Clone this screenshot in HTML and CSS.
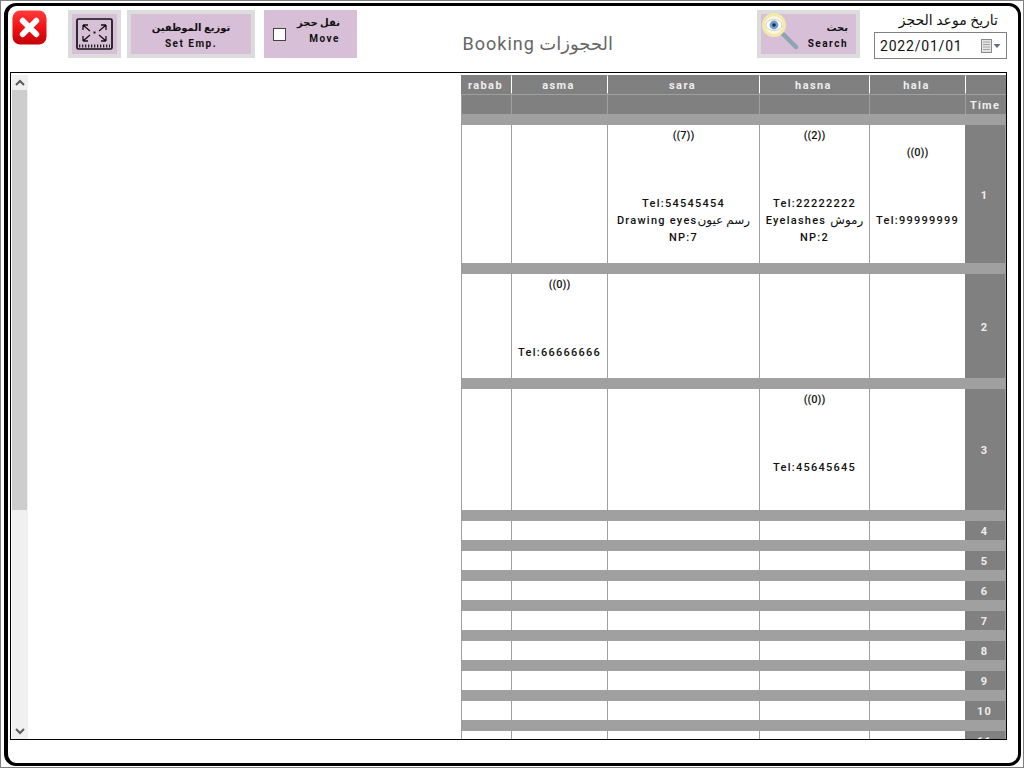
FILE: index.html
```html
<!DOCTYPE html>
<html lang="ar">
<head>
<meta charset="utf-8">
<title>Booking</title>
<link rel="stylesheet" href="styles.css">
</head>
<body>
<div class="edge">
<div class="frame">
  <header class="top">
    <svg class="close" viewBox="0 0 36 36" width="35" height="35">
      <defs><linearGradient id="red" x1="0" y1="0" x2="0" y2="1"><stop offset="0" stop-color="#ff3b3b"/><stop offset="0.55" stop-color="#ee0f14"/><stop offset="1" stop-color="#c40008"/></linearGradient></defs>
      <rect x="0.5" y="0.5" width="35" height="35" rx="8" fill="url(#red)"/>
      <path d="M11 11 L25 25 M25 11 L11 25" stroke="#fff" stroke-width="6" stroke-linecap="round"/>
    </svg>
    <button class="btn expand">
      <span class="fill">
        <svg viewBox="0 0 37 32" width="37" height="32">
          <rect x="1" y="1" width="35" height="30" rx="1.5" fill="none" stroke="#111" stroke-width="1.7"/>
          <path d="M7 7 L14 13 M7 7 h5 M7 7 v5 M30 7 L23 13 M30 7 h-5 M30 7 v5 M7 23 L14 17 M7 23 h5 M7 23 v-5 M30 23 L23 17 M30 23 h-5 M30 23 v-5" fill="none" stroke="#111" stroke-width="1.3"/>
          <rect x="17.5" y="13.5" width="2" height="2" fill="#111"/>
          <path d="M3 28 H34" stroke="#222" stroke-width="3" stroke-dasharray="1.3 1.7"/>
        </svg>
      </span>
    </button>
    <button class="btn emp">
      <span class="fill two"><span>توزيع الموظفين</span><span>Set Emp.</span></span>
    </button>
    <label class="move">
      <span class="box"></span>
      <span class="movetext"><span>نقل حجز</span><span>Move</span></span>
    </label>
    <h1 class="title">الحجوزات Booking</h1>
    <button class="btn search">
      <span class="fill searchfill">
        <svg class="lens" viewBox="0 0 38 38" width="38" height="38">
          <path d="M21 21 L35 35" stroke="#8fa3b3" stroke-width="4.5" stroke-linecap="round"/>
          <circle cx="13" cy="13" r="10.5" fill="#f7f7ee" stroke="#f3eaa8" stroke-width="3"/>
          <ellipse cx="13" cy="13" rx="8" ry="5.5" fill="#fff" stroke="#c9b98a" stroke-width="0.7"/>
          <circle cx="13" cy="13" r="4.4" fill="#6aa0d6"/>
          <circle cx="13" cy="13" r="1.8" fill="#1d2c44"/>
        </svg>
        <span class="searchtext"><span>بحث</span><span>Search</span></span>
      </span>
    </button>
    <div class="date">
      <div class="datelabel">تاريخ موعد الحجز</div>
      <div class="dateinput">
        <span class="dateval">2022/01/01</span>
        <svg viewBox="0 0 20 14" width="20" height="14">
          <rect x="0.5" y="0.5" width="10" height="13" fill="#e4e4e4" stroke="#8a8a8a"/>
          <path d="M2 3 h7 M2 5.5 h7 M2 8 h7 M2 10.5 h7" stroke="#a5a5a5"/>
          <path d="M12.5 5 h7 l-3.5 4 z" fill="#5e6f85"/>
        </svg>
      </div>
    </div>
  </header>
  <main class="panel">
    <div class="scrollbar">
      <div class="sbtn"><svg viewBox="0 0 10 7" width="10" height="7"><path d="M1 6 L5 2 L9 6" fill="none" stroke="#5a5a5a" stroke-width="2"/></svg></div>
      <div class="thumb"></div>
      <div class="track"></div>
      <div class="sbtn"><svg viewBox="0 0 10 7" width="10" height="7"><path d="M1 1 L5 5 L9 1" fill="none" stroke="#5a5a5a" stroke-width="2"/></svg></div>
    </div>
    <div class="empty"></div>
    <table class="grid">
      <colgroup><col class="c1"><col class="c2"><col class="c3"><col class="c4"><col class="c5"><col class="c6"></colgroup>
      <tr class="r-head"><th>rabab</th><th>asma</th><th>sara</th><th>hasna</th><th>hala</th><th></th></tr>
      <tr class="r-sub"><td></td><td></td><td></td><td></td><td></td><td>Time</td></tr>
      <tr class="r-gap"><td colspan="6"></td></tr>
      <tr class="r-a">
        <td></td><td></td>
        <td><span class="count">((7))</span><br><br><br><br>Tel:54545454<br>Drawing eyes<span class="ar" dir="rtl">رسم عيون</span><br>NP:7<br><br></td>
        <td><span class="count">((2))</span><br><br><br><br>Tel:22222222<br>Eyelashes <span class="ar" dir="rtl">رموش</span><br>NP:2<br><br></td>
        <td><span class="count">((0))</span><br><br><br><br>Tel:99999999<br><br></td>
        <td class="t">1</td>
      </tr>
      <tr class="r-gap"><td colspan="6"></td></tr>
      <tr class="r-b">
        <td></td>
        <td><span class="count">((0))</span><br><br><br><br>Tel:66666666<br><br></td>
        <td></td><td></td><td></td>
        <td class="t">2</td>
      </tr>
      <tr class="r-gap"><td colspan="6"></td></tr>
      <tr class="r-c">
        <td></td><td></td><td></td>
        <td><span class="count">((0))</span><br><br><br><br>Tel:45645645<br><br><br></td>
        <td></td>
        <td class="t">3</td>
      </tr>
      <tr class="r-gap"><td colspan="6"></td></tr>
      <tr class="r-s"><td></td><td></td><td></td><td></td><td></td><td class="t">4</td></tr>
      <tr class="r-gap"><td colspan="6"></td></tr>
      <tr class="r-s"><td></td><td></td><td></td><td></td><td></td><td class="t">5</td></tr>
      <tr class="r-gap"><td colspan="6"></td></tr>
      <tr class="r-s"><td></td><td></td><td></td><td></td><td></td><td class="t">6</td></tr>
      <tr class="r-gap"><td colspan="6"></td></tr>
      <tr class="r-s"><td></td><td></td><td></td><td></td><td></td><td class="t">7</td></tr>
      <tr class="r-gap"><td colspan="6"></td></tr>
      <tr class="r-s"><td></td><td></td><td></td><td></td><td></td><td class="t">8</td></tr>
      <tr class="r-gap"><td colspan="6"></td></tr>
      <tr class="r-s"><td></td><td></td><td></td><td></td><td></td><td class="t">9</td></tr>
      <tr class="r-gap"><td colspan="6"></td></tr>
      <tr class="r-s"><td></td><td></td><td></td><td></td><td></td><td class="t">10</td></tr>
      <tr class="r-gap"><td colspan="6"></td></tr>
      <tr class="r-s"><td></td><td></td><td></td><td></td><td></td><td class="t">11</td></tr>
    </table>
  </main>
</div>
</div>
</body>
</html>
```
FILE: styles.css
```css
* { box-sizing: border-box; }
html, body { margin: 0; padding: 0; height: 768px; overflow: hidden; }
body {
  background: #808080;
  padding: 1px;
  font-family: "Roboto", "DejaVu Sans", sans-serif;
  direction: ltr;
}
.edge { background: #fff; height: 766px; padding: 2px 2px 1px 3px; }
.frame {
  height: 100%;
  border: solid #000;
  border-width: 3px 3px 3px 4px;
  border-radius: 12px;
  background: #fff;
  padding: 0 0 0 2px;
}
.top { display: flex; align-items: flex-start; height: 66px; padding: 4px 0 0 2px; }
.close { flex: none; }
.btn {
  border: 0; margin: 0; padding: 4px 4px; background: #dcdcdc;
  height: 48px; font: inherit; color: #111; display: flex;
}
.fill { flex: 1; background: #d8bfd8; display: flex; }
.expand { width: 53px; margin-left: 21px; }
.expand .fill { align-items: center; justify-content: center; }
.emp { width: 128px; margin-left: 6px; }
.two { flex-direction: column; align-items: center; justify-content: center; padding-top: 3px; }
.two span, .movetext span, .searchtext span { font-size: 10px; font-weight: 700; letter-spacing: 1.5px; line-height: 16px; }
.move {
  width: 93px; height: 48px; margin-left: 9px; background: #d8bfd8;
  display: flex; align-items: center; padding-left: 9px; color: #111;
}
.box { width: 13px; height: 13px; background: #fff; border: 1px solid #444; }
.movetext { margin: -6px 0 0; width: 54px; display: flex; flex-direction: column; align-items: flex-end; }
.title {
  margin: 24px 0 0 107px; width: 149px; font-size: 18px; font-weight: 400; line-height: 20px;
  color: #666; letter-spacing: 1px; white-space: nowrap; direction: rtl; text-align: left;
}
.search { width: 103px; margin-left: 144px; }
.searchfill { padding-right: 8px; justify-content: space-between; }
.lens { margin: -2px 0 0 0; flex: none; }
.searchtext { display: flex; flex-direction: column; align-items: flex-end; justify-content: center; color: #111; padding-top: 3px; }
.date { margin-left: 14px; width: 133px; }
.datelabel { height: 22px; font-size: 14px; line-height: 21px; letter-spacing: 0.7px; color: #111; text-align: right; padding-right: 9px; }
.dateinput {
  height: 27px; border: 1px solid #808080; display: flex; align-items: center;
  justify-content: space-between; padding: 0 5px;
}
.dateval { font-size: 14px; letter-spacing: 0.8px; color: #111; }

.panel {
  width: 997px; height: 668px; border: 1px solid #000; display: flex; overflow: hidden;
  padding: 2px 0 0 1px; background: #fff;
}
.scrollbar { flex: none; width: 16px; height: 664px; display: flex; flex-direction: column; background: #f0f0f0; }
.sbtn { height: 15px; flex: none; display: flex; align-items: center; justify-content: center; }
.thumb { height: 420px; background: #cdcdcd; margin-right: 1px; flex: none; }
.track { flex: 1; }
.empty { flex: 1; }

.grid {
  flex: none; width: 545px; table-layout: fixed; border-collapse: separate; border-spacing: 0;
  align-self: flex-start; font-size: 11px; font-weight: 500; letter-spacing: 1.25px; line-height: 17px; color: #111;
}
.c1 { width: 50px; } .c2 { width: 96px; } .c3 { width: 152px; }
.c4 { width: 110px; } .c5 { width: 96px; } .c6 { width: 41px; }
.grid th, .grid td { padding: 2px 0 0; text-align: center; white-space: nowrap; overflow: hidden; }
.grid td { border-left: 1px solid #a0a0a0; vertical-align: middle; background: #fff; }
.count { font-size: 11px; letter-spacing: 0; }
.ar { font-size: 12px; letter-spacing: 1.4px; }
.r-head th {
  height: 19px; background: #808080; color: #eee; font-size: 11px; font-weight: 700; line-height: 15px; letter-spacing: 1.4px;
  border-left: 1px solid #fff; border-top: 1px solid #808080; border-bottom: 1px solid #808080; padding-right: 2px;
}
.r-head th:first-child { border-left-color: #808080; }
.r-sub td { height: 20px; background: #808080; color: #eee; font-weight: 700; line-height: 15px; border-top: 1px solid #a0a0a0; padding-right: 2px; }
.grid .r-gap td { height: 11px; padding: 0; background: #a0a0a0; border: 0; line-height: 0; font-size: 0; }
.grid td.t { background: #808080; color: #eee; font-weight: 700; border-left: 1px solid #808080; border-right: 1px solid #a0a0a0; padding-right: 2px; }
.r-a td { height: 138px; }
.r-b td { height: 104px; }
.r-c td { height: 121px; }
.r-s td { height: 19px; line-height: 15px; }
```
